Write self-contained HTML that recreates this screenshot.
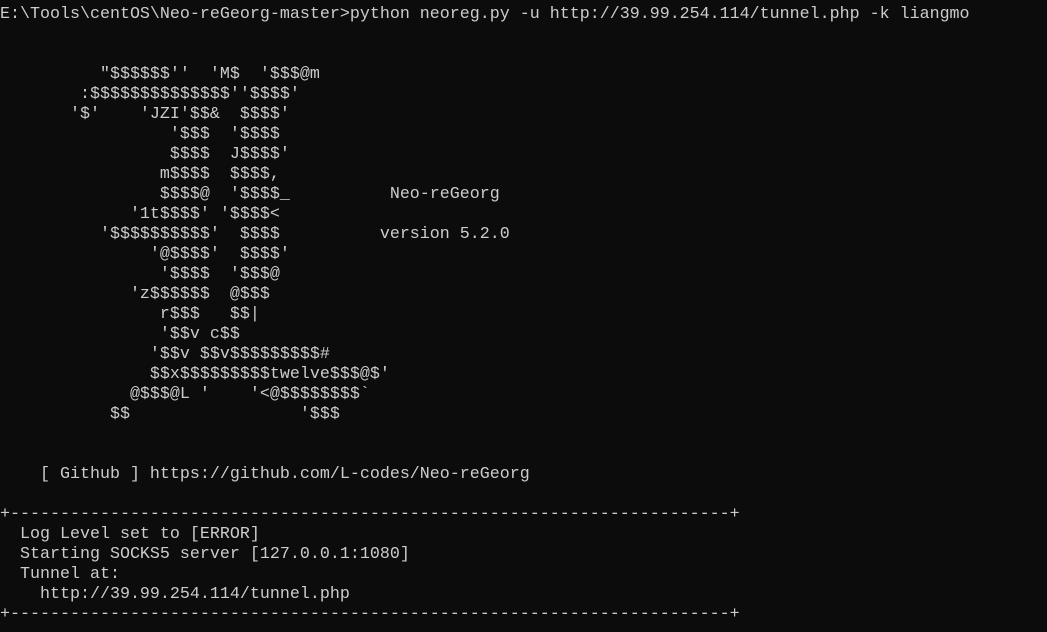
<!DOCTYPE html>
<html><head><meta charset="utf-8"><style>
html,body{margin:0;padding:0;width:1047px;height:632px;background:#0c0c0c;overflow:hidden}
pre{margin:0;padding:5px 0 0 0;font-family:"Liberation Mono",monospace;font-size:16.667px;line-height:20px;color:#cccccc;white-space:pre}
</style></head><body><pre>E:\Tools\centOS\Neo-reGeorg-master&gt;python neoreg.py -u http://39.99.254.114/tunnel.php -k liangmo


          "$$$$$$''  'M$  '$$$@m
        :$$$$$$$$$$$$$$''$$$$'
       '$'    'JZI'$$&amp;  $$$$'
                 '$$$  '$$$$
                 $$$$  J$$$$'
                m$$$$  $$$$,
                $$$$@  '$$$$_          Neo-reGeorg
             '1t$$$$' '$$$$&lt;
          '$$$$$$$$$$'  $$$$          version 5.2.0
               '@$$$$'  $$$$'
                '$$$$  '$$$@
             'z$$$$$$  @$$$
                r$$$   $$|
                '$$v c$$
               '$$v $$v$$$$$$$$$#
               $$x$$$$$$$$$twelve$$$@$'
             @$$$@L '    '&lt;@$$$$$$$$`
           $$                 '$$$


    [ Github ] https://github.com/L-codes/Neo-reGeorg

+------------------------------------------------------------------------+
  Log Level set to [ERROR]
  Starting SOCKS5 server [127.0.0.1:1080]
  Tunnel at:
    http://39.99.254.114/tunnel.php
+------------------------------------------------------------------------+</pre></body></html>
